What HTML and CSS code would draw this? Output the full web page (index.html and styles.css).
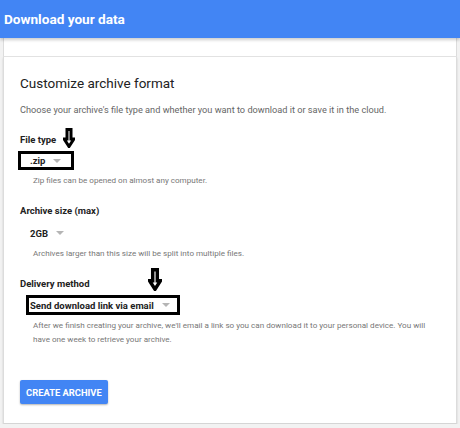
FILE: index.html
```html
<!DOCTYPE html>
<html>
<head>
<meta charset="utf-8">
<link rel="stylesheet" href="styles.css">
</head>
<body>
<header class="topbar">Download your data</header>
<div class="cards">
  <div class="card card-top"></div>
  <div class="card card-main">
    <h1 class="title">Customize archive format</h1>
    <p class="desc">Choose your archive's file type and whether you want to download it or save it in the cloud.</p>

    <div class="field field-first">
      <div class="label">File type</div>
      <svg class="arrow arrow-zip" viewBox="0 0 12 20" aria-hidden="true"><path d="M4 1.5 H8 V11 H10.8 L6 18.5 L1.2 11 H4 Z"/></svg>
      <div class="select mark mark-zip"><span>.zip</span><i class="tri"></i></div>
      <div class="help">Zip files can be opened on almost any computer.</div>
    </div>

    <div class="field">
      <div class="label">Archive size (max)</div>
      <div class="select plain"><span>2GB</span><i class="tri"></i></div>
      <div class="help">Archives larger than this size will be split into multiple files.</div>
    </div>

    <div class="field">
      <div class="label">Delivery method</div>
      <svg class="arrow arrow-mail" viewBox="0 0 12 20" aria-hidden="true"><path d="M4 1.5 H8 V11 H10.8 L6 18.5 L1.2 11 H4 Z"/></svg>
      <div class="select mark mark-mail"><span>Send download link via email</span><i class="tri"></i></div>
      <div class="help help-wide">After we finish creating your archive, we'll email a link so you can download it to your personal device. You will have one week to retrieve your archive.</div>
    </div>

    <button class="btn">CREATE ARCHIVE</button>
  </div>
</div>
</body>
</html>
```

FILE: styles.css
```css
* { box-sizing: border-box; }
body {
  margin: 0;
  background: #f2f2f2;
  font-family: Roboto, "Liberation Sans", Arial, sans-serif;
  color: #222;
}
.topbar {
  height: 38px;
  background: #4285f4;
  color: #fff;
  font-weight: 700;
  font-size: 13.6px;
  display: flex;
  align-items: center;
  padding-left: 4px;
  box-shadow: 0 2px 3px rgba(0,0,0,0.2);
  position: relative;
  z-index: 1;
}
.cards {
  margin: 0 3px 0 3px;
}
.card {
  background: #fff;
  border-left: 1px solid #dcdcdc;
  border-right: 1px solid #dcdcdc;
}
.card-top {
  height: 19px;
  border-bottom: 1px solid #e4e4e4;
}
.card-main {
  padding: 16px 16px 19px 16px;
  border-bottom: 1px solid #d5d5d5;
  box-shadow: 0 1px 2px rgba(0,0,0,0.15);
}
.title {
  margin: 0;
  font-size: 13.5px;
  font-weight: 400;
  line-height: 20px;
  color: #222;
}
.desc {
  margin: 9px 0 0;
  font-size: 9.2px;
  line-height: 16px;
  color: #666;
}
.field {
  position: relative;
  margin-top: 16px;
}
.field-first { margin-top: 14px; }
.label {
  font-size: 9.5px;
  font-weight: 700;
  line-height: 16px;
  color: #222;
}
.select {
  display: flex;
  align-items: center;
  width: fit-content;
  font-size: 9.5px;
  font-weight: 700;
  color: #222;
}
.plain {
  height: 20px;
  margin: 4px 0 0 10px;
}
.mark {
  border: 3px solid #000;
  height: 20px;
  margin-top: 3px;
}
.mark-zip {
  margin-left: -2px;
  padding: 0 10px 0 9px;
  height: 19px;
}
.mark-mail {
  margin-left: 6px;
  padding: 0 7px 0 1px;
}
.tri {
  display: inline-block;
  width: 0;
  height: 0;
  margin-left: 8px;
  border-left: 4px solid transparent;
  border-right: 4px solid transparent;
  border-top: 4px solid #b5b5b5;
}
.help {
  margin: 3px 0 0 13px;
  font-size: 8.1px;
  line-height: 14px;
  color: #777;
}
.help-wide { max-width: 404px; }
.arrow {
  position: absolute;
  fill: #fff;
  stroke: #000;
  stroke-width: 3;
  stroke-linejoin: miter;
}
.arrow-zip {
  left: 43px;
  top: -4px;
  width: 12px;
  height: 20px;
}
.arrow-mail {
  left: 128px;
  top: -8px;
  width: 14px;
  height: 23px;
}
.btn {
  display: block;
  margin-top: 34px;
  height: 24px;
  padding: 0 6px;
  background: #4285f4;
  color: #fff;
  border: none;
  border-radius: 2px;
  font-family: Roboto, "Liberation Sans", Arial, sans-serif;
  font-size: 9.4px;
  font-weight: 700;
  box-shadow: 0 1px 2px rgba(0,0,0,0.3);
}
```
